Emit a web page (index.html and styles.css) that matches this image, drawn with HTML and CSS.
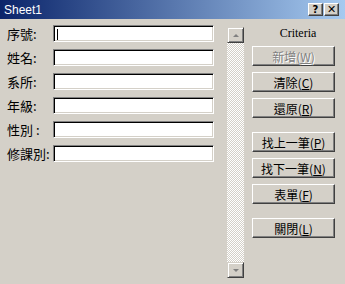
FILE: index.html
```html
<!DOCTYPE html>
<html>
<head>
  <meta charset="utf-8">
  <title>Sheet1</title>
  <link rel="stylesheet" href="styles.css">
</head>
<body>
  <div class="window">
    <div class="titlebar">
      <span class="title">Sheet1</span>
      <div class="title-buttons">
        <span class="tbtn">?</span>
        <span class="tbtn close">&#x2715;</span>
      </div>
    </div>
    <div class="content">
      <div class="form">
        <label>序號:</label><div class="field"><span class="caret"></span></div>
        <label>姓名:</label><div class="field"></div>
        <label>系所:</label><div class="field"></div>
        <label>年級:</label><div class="field"></div>
        <label>性別 :</label><div class="field"></div>
        <label>修課別:</label><div class="field"></div>
      </div>

      <div class="scrollbar">
        <div class="arrow up"><span></span></div>
        <div class="track"></div>
        <div class="arrow down"><span></span></div>
      </div>

      <div class="side">
        <div class="criteria">Criteria</div>
        <button class="btn" disabled>新增(<u>W</u>)</button>
        <button class="btn">清除(<u>C</u>)</button>
        <button class="btn">還原(<u>R</u>)</button>
        <button class="btn spaced">找上一筆(<u>P</u>)</button>
        <button class="btn">找下一筆(<u>N</u>)</button>
        <button class="btn">表單(<u>F</u>)</button>
        <button class="btn spaced">關閉(<u>L</u>)</button>
      </div>
    </div>
  </div>
</body>
</html>
```

FILE: styles.css
```css
body {
  margin: 0;
  background-color: #d4d0c8;
  font-family: "Noto Sans CJK TC", "Liberation Sans", sans-serif;
}

.window {
  width: 345px;
  height: 284px;
  background-color: #d4d0c8;
  overflow: hidden;
}

.titlebar {
  height: 19px;
  display: flex;
  align-items: center;
  justify-content: space-between;
  padding: 0 6px 0 4px;
  background: linear-gradient(to right, #0a246a, #a6caf0);
}

.title {
  color: #fff;
  font-family: "Liberation Sans", sans-serif;
  font-size: 12px;
}

.title-buttons {
  display: flex;
  gap: 1px;
}

.tbtn {
  width: 15px;
  height: 13px;
  box-sizing: border-box;
  background-color: #d4d0c8;
  border-top: 1px solid #fff;
  border-left: 1px solid #fff;
  border-right: 1px solid #404040;
  border-bottom: 1px solid #404040;
  box-shadow: inset -1px -1px 0 #808080;
  font-family: "DejaVu Sans", sans-serif;
  font-size: 10px;
  font-weight: bold;
  line-height: 11px;
  text-align: center;
  color: #000;
}

.tbtn.close {
  font-size: 11px;
  font-weight: 900;
}

.content {
  display: flex;
  align-items: flex-start;
}

.form {
  display: grid;
  grid-template-columns: 46px 161px;
  row-gap: 7px;
  margin: 6px 0 0 7px;
}

.form label {
  font-size: 13px;
  line-height: 17px;
  color: #000;
}

.field {
  height: 17px;
  box-sizing: border-box;
  background-color: #fff;
  border-top: 1px solid #808080;
  border-left: 1px solid #808080;
  border-right: 1px solid #fff;
  border-bottom: 1px solid #fff;
  box-shadow: inset 1px 1px 0 #000, inset -1px -1px 0 #d4d0c8;
  padding: 3px 0 0 3px;
}

.caret {
  display: block;
  width: 1px;
  height: 11px;
  background-color: #000;
}

.scrollbar {
  width: 17px;
  height: 251px;
  margin: 8px 0 0 13px;
  display: flex;
  flex-direction: column;
}

.track {
  flex: 1;
  background: repeating-conic-gradient(#d4d0c8 0 25%, #fff 0 50%) 0 0 / 2px 2px;
}

.arrow {
  height: 16px;
  box-sizing: border-box;
  background-color: #d4d0c8;
  border-top: 1px solid #d4d0c8;
  border-left: 1px solid #d4d0c8;
  border-right: 1px solid #404040;
  border-bottom: 1px solid #404040;
  box-shadow: inset 1px 1px 0 #fff, inset -1px -1px 0 #808080;
  display: flex;
  align-items: center;
  justify-content: center;
}

.arrow span {
  width: 0;
  height: 0;
  border-left: 3px solid transparent;
  border-right: 3px solid transparent;
}

.arrow.up span {
  border-bottom: 3px solid #808080;
}

.arrow.down span {
  border-top: 3px solid #808080;
}

.side {
  display: flex;
  flex-direction: column;
  gap: 6px;
  margin: 8px 0 0 8px;
  width: 83px;
}

.criteria {
  font-family: "Liberation Serif", serif;
  font-size: 12px;
  line-height: 12px;
  text-align: center;
  padding-left: 9px;
  margin-bottom: 1px;
}

.btn {
  width: 83px;
  height: 20px;
  padding: 0;
  box-sizing: border-box;
  background-color: #d4d0c8;
  border-top: 1px solid #fff;
  border-left: 1px solid #fff;
  border-right: 1px solid #404040;
  border-bottom: 1px solid #404040;
  box-shadow: inset -1px -1px 0 #808080;
  font-family: "Noto Sans CJK TC", sans-serif;
  font-size: 12px;
  line-height: 17px;
  color: #000;
}

.btn:disabled {
  color: #808080;
  text-shadow: 1px 1px 0 #fff;
}

.btn u {
  text-decoration: underline;
}

.spaced {
  margin-top: 8px;
}
```
